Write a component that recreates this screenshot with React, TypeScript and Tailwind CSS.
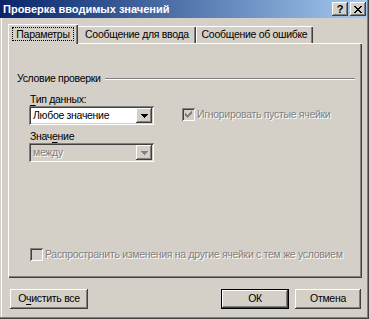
import React from "react";

const raised =
  "shadow-[inset_-1px_-1px_#404040,inset_1px_1px_#ffffff,inset_-2px_-2px_#808080,inset_2px_2px_#d4d0c8]";
const sunken =
  "shadow-[inset_1px_1px_#808080,inset_-1px_-1px_#ffffff,inset_2px_2px_#404040,inset_-2px_-2px_#d4d0c8]";
const grayText = "text-[#808080] [text-shadow:1px_1px_0_#ffffff]";

function Arrow({ color }: { color: string }) {
  return (
    <svg width="7" height="4" viewBox="0 0 7 4" shapeRendering="crispEdges">
      <path d="M0 0h7v1H0zM1 1h5v1H1zM2 2h3v1H2zM3 3h1v1H3z" fill={color} />
    </svg>
  );
}

function Combo({ value, disabled }: { value: string; disabled?: boolean }) {
  return (
    <div
      className={`w-[125px] h-[19px] flex items-center p-[2px] ${sunken} ${
        disabled ? "bg-[#d4d0c8]" : "bg-white"
      }`}
    >
      <span className={`flex-1 pl-[2px] leading-[13px] ${disabled ? grayText : ""}`}>{value}</span>
      <div className={`w-[16px] h-[15px] bg-[#d4d0c8] flex items-center justify-center ${raised}`}>
        <Arrow color={disabled ? "#808080" : "#000000"} />
      </div>
    </div>
  );
}

function CheckBox({ checked }: { checked?: boolean }) {
  return (
    <div className={`w-[13px] h-[13px] shrink-0 bg-[#d4d0c8] flex items-center justify-center ${sunken}`}>
      {checked && (
        <svg width="7" height="7" viewBox="0 0 7 7" shapeRendering="crispEdges">
          <path
            d="M6 0h1v3H6zM5 1h1v3H5zM4 2h1v3H4zM3 3h1v3H3zM2 4h1v3H2zM1 3h1v3H1zM0 2h1v3H0z"
            fill="#808080"
          />
        </svg>
      )}
    </div>
  );
}

function Button({ children, wide, def }: { children: React.ReactNode; wide: string; def?: boolean }) {
  return (
    <div
      className={`${wide} h-[20px] flex items-center justify-center bg-[#d4d0c8] ${
        def
          ? "shadow-[inset_0_0_0_1px_#000000,inset_-2px_-2px_#404040,inset_2px_2px_#ffffff,inset_-3px_-3px_#808080]"
          : raised
      }`}
    >
      {children}
    </div>
  );
}

export default function App() {
  return (
    <div
      className="w-[369px] h-[319px] bg-[#d4d0c8] flex flex-col overflow-hidden text-[10.5px] tracking-[-0.3px] text-black font-['Liberation_Sans',Arial,sans-serif] shadow-[inset_-1px_-1px_#404040,inset_-2px_-2px_#808080,inset_1px_0_#d4d0c8,inset_2px_0_#ffffff]"
    >
      <div className="h-[18px] mr-[2px] flex items-center pl-[3px] pr-[1px] bg-gradient-to-r from-[#0a246a] to-[#a6caf0]">
        <span className="font-bold text-white text-[11px] tracking-normal leading-none">Проверка вводимых значений</span>
        <div className="ml-auto flex gap-[2px]">
          <div className={`w-[16px] h-[14px] bg-[#d4d0c8] flex items-center justify-center font-bold text-[11px] leading-none ${raised}`}>
            ?
          </div>
          <div className={`w-[16px] h-[14px] bg-[#d4d0c8] flex items-center justify-center ${raised}`}>
            <svg width="8" height="7" viewBox="0 0 8 7" shapeRendering="crispEdges">
              <path
                d="M0 0h2v1H0zM6 0h2v1H6zM1 1h2v1H1zM5 1h2v1H5zM2 2h4v1H2zM3 3h2v1H3zM2 4h4v1H2zM1 5h2v1H1zM5 5h2v1H5zM0 6h2v1H0zM6 6h2v1H6z"
                fill="#000"
              />
            </svg>
          </div>
        </div>
      </div>

      {/* tabs */}
      <div className="mt-[6px] ml-[8px] h-[20px] flex items-end relative z-10">
        <div className="w-[70px] h-[20px] bg-[#d4d0c8] flex items-center justify-center shadow-[inset_1px_1px_#ffffff,inset_-1px_0_#404040,inset_-2px_0_#808080]">
          <span className="px-[3px] leading-[12px] outline outline-1 outline-dotted outline-black">Параметры</span>
        </div>
        <div className="w-[118px] h-[17px] mb-[1px] flex items-center justify-center shadow-[inset_0_1px_#ffffff,inset_-1px_0_#404040,inset_-2px_0_#808080]">
          Сообщение для ввода
        </div>
        <div className="w-[117px] h-[17px] mb-[1px] flex items-center justify-center shadow-[inset_1px_1px_#ffffff,inset_-1px_0_#404040,inset_-2px_0_#808080]">
          Сообщение об ошибке
        </div>
      </div>

      {/* panel */}
      <div className="-mt-[1px] ml-[8px] w-[354px] h-[235px] flex flex-col pt-[29px] pb-[17px] shadow-[inset_1px_1px_#ffffff,inset_-1px_-1px_#404040,inset_-2px_-2px_#808080]">
        <div className="h-[13px] flex items-center pl-[9px] pr-[7px]">
          <span className="leading-[13px]">Условие проверки</span>
          <div className="flex-1 ml-[4px] h-[2px] border-t border-[#808080] border-b border-b-white" />
        </div>
        <div className="mt-[8px] ml-[22px] leading-[13px] h-[13px]">
          <span className="underline underline-offset-2">Т</span>ип данных:
        </div>
        <div className="ml-[21px] flex items-start">
          <Combo value="Любое значение" />
          <div className="ml-[28px] mt-[2px] flex items-center">
            <CheckBox checked />
            <span className={`ml-[2px] leading-[13px] ${grayText}`}>Игнорировать пустые ячейки</span>
          </div>
        </div>
        <div className="mt-[5px] ml-[22px] leading-[13px] h-[13px]">
          Знач<span className="underline underline-offset-2">е</span>ние
        </div>
        <div className="ml-[21px] flex">
          <Combo value="между" disabled />
        </div>
        <div className="mt-auto ml-[22px] flex items-center">
          <CheckBox />
          <span className={`ml-[2px] leading-[13px] whitespace-nowrap ${grayText}`}>
            Распространить изменения на другие ячейки с тем же условием
          </span>
        </div>
      </div>

      {/* buttons */}
      <div className="mt-[11px] flex items-center pl-[10px] pr-[8px]">
        <Button wide="w-[78px]">
          <span>
            О<span className="underline underline-offset-2">ч</span>истить все
          </span>
        </Button>
        <div className="ml-auto flex gap-[6px]">
          <Button wide="w-[68px]" def>
            ОК
          </Button>
          <Button wide="w-[66px]">Отмена</Button>
        </div>
      </div>
    </div>
  );
}
